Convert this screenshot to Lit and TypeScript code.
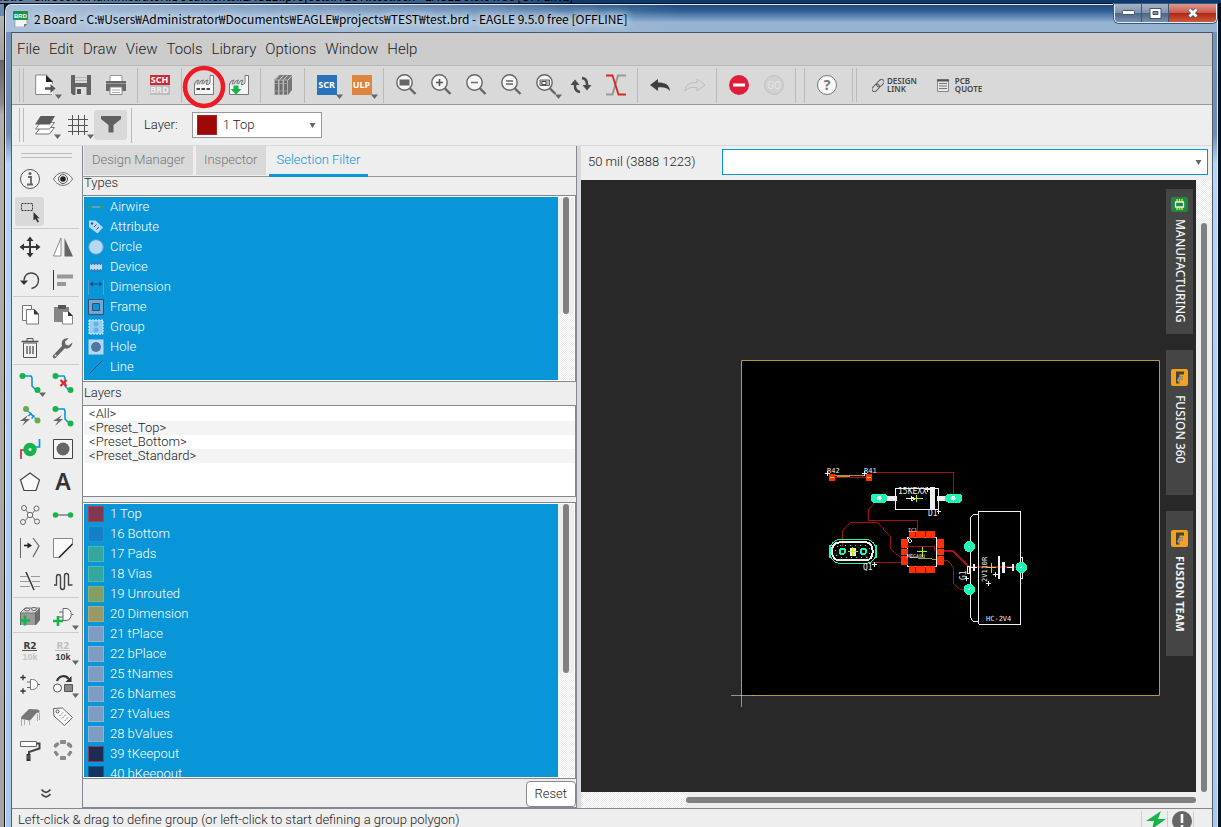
import { LitElement, html, svg, css, nothing } from "lit";
import { customElement, property, state } from "lit/decorators.js";
import { classMap } from "lit/directives/class-map.js";
import { styleMap } from "lit/directives/style-map.js";

const G = "#666";
const GREEN = "#17b34b";
const BLUE = "#0996d9";

const lens = (inner: unknown) => svg`
  <circle cx="10.5" cy="9.5" r="7.7" fill="#f6f6f6" stroke="${G}" stroke-width="1.4"/>
  <path d="M16 15.5l5.5 5.5" stroke="${G}" stroke-width="2.4"/>${inner}`;

const plus = (x: number, y: number, s = 4.5, c = GREEN, w = 2.6) =>
  svg`<path d="M${x - s} ${y}h${s * 2}M${x} ${y - s}v${s * 2}" stroke="${c}" stroke-width="${w}"/>`;

const factoryShape = svg`<path d="M2.500 21.500V12.500l2.500-1 2 .5 2.500-1 2 .5 2.500-1 3 .5.500-8.500h3.500l.5 19z" fill="#f6f6f6"/><path d="M2.500 21.500V10.500M2.500 21.500h19M21.500 21.500v-19M18 2.500h3.500M18 2.500v7.500q-1.500 2-4 1.500" stroke="#777"/><path d="M2.500 11q1-4 4.500-4-1.500 1.500-1.500 4.500M7 11q1-4 4.500-4-1.500 1.500-1.500 4.500M11.500 11q1-4 4.500-4-1.500 1.500-1.500 4.500" stroke="#777"/>`;

const ICONS: Record<string, unknown> = {
  newdoc: svg`<path d="M2 2h10.500l6 6.500v13.500h-16.500z" fill="#fff"/><path d="M18.500 11V8.500L12.500 2H1.700v19.500H18" fill="none" stroke="#888" stroke-width="1"/><path d="M12 2v7h7z" fill="#222"/><path d="M11 15.500h7" stroke="#555" stroke-width="2.600"/><path d="M16.500 11l5 4.500-5 4.500z" fill="#555"/>`,
  save: svg`<path d="M2 2h20v20H4l-2-2z" fill="#636363"/><path d="M6 2h12v8H6z" fill="#d9d9d9"/><path d="M6 4.500h12M6 7.500h12" stroke="#b5b5b5"/><path d="M6.500 14h11v8h-11z" fill="#ddd"/><path d="M8 16h4v5H8z" fill="#555"/>`,
  print: svg`<path d="M6 2.500h12v6H6z" fill="#fff" stroke="#999"/><path d="M2 8h20v10H2z" fill="#666"/><path d="M2 10.500h20" stroke="#999"/><path d="M6 14h12v7.500H6z" fill="#fff" stroke="#888"/><path d="M8 17h8M8 19.500h8" stroke="#aaa"/>`,
  factory: svg`${factoryShape}<path d="M4.500 16h3.500M9.500 16h3.500M14.500 16h3.500" stroke="#444" stroke-width="2"/>`,
  factoryDown: svg`${factoryShape}<path d="M6.500 12.500h5v3.500h3l-5.500 5.500L3.500 16h3z" fill="${GREEN}"/>`,
  books: svg`<path d="M3 7l5-5h13v15l-4 5H3z" fill="#777"/><path d="M3.500 7h4v15h-4zM8 7h4v15H8zM12.500 7h4v15h-4z" fill="#6d6d6d" stroke="#d0d0d0" stroke-width=".7"/><path d="M4 6.500l4-4M8.500 6.500l4-4M12.500 6.500l4-4M17 7l4-4.500" stroke="#ddd" stroke-width=".9"/><path d="M4 10.500h13M4 18h13" stroke="#aaa" stroke-width=".8"/>`,
  zoomFit: lens(svg`<path d="M5.500 6.500h10v6h-10z" fill="#666"/>`),
  zoomIn: lens(svg`<path d="M7 9.500h7M10.500 6v7" stroke="#555" stroke-width="1.600"/>`),
  zoomOut: lens(svg`<path d="M7 9.500h7" stroke="#777" stroke-width="1.600"/>`),
  zoomEq: lens(svg`<path d="M7 8h7M7 11h7" stroke="#666" stroke-width="1.500"/>`),
  zoomSel: lens(svg`<path d="M6 7h9.500v5.500H6z" fill="#bbb" stroke="#666"/><path d="M8 8.500h4v3H8z" fill="#fff" stroke="#444"/>`),
  refresh: svg`<g fill="none" stroke="#4a4a4a" stroke-width="2.600"><path d="M6 11v2c0 3 2 5.500 5 6"/><path d="M18 13v-2c0-3-2-5.500-5-6"/></g><path d="M1.500 12L6 6.500l4.500 5.500zM13.500 12h9L18 17.500z" fill="#4a4a4a"/>`,
  ripup: svg`<path d="M2 21.500h6.500L14 2.500h8" fill="none" stroke="#999" stroke-width="2"/><path d="M2 2.500h6.500l6 19h7.500" fill="none" stroke="#d8261c" stroke-width="1.800"/>`,
  undo: svg`<path d="M2 12l8-6v3.500c7 0 11.500 2 12 8.500-3-3.500-7-4-12-3.500V18z" fill="#3e3e3e"/>`,
  redo: svg`<path d="M22 12l-8-6v3.500c-7 0-11.500 2-12 8.500 3-3.500 7-4 12-3.500V18z" fill="none" stroke="#bbb"/>`,
  stop: svg`<circle cx="12" cy="12" r="10" fill="#dd1f3c"/><path d="M6 12h12" stroke="#fff" stroke-width="3"/>`,
  go: svg`<circle cx="12" cy="12" r="9.500" fill="#d0d0d0" stroke="#c2c2c2"/><text x="12" y="16" text-anchor="middle" font-size="10" font-family="Roboto, sans-serif" fill="#e6e6e6">GO</text>`,
  help: svg`<circle cx="12" cy="12" r="9.500" fill="#f8f8f8" stroke="#777"/><text x="12" y="17" text-anchor="middle" font-size="14" font-weight="700" font-family="Noto Sans, sans-serif" fill="#777">?</text>`,
  layers: svg`<path d="M2.500 21l5-6.500h14l-5 6.500z" fill="#fff" stroke="#777"/><path d="M2.500 16l5-6.500h14l-5 6.500z" fill="#fff" stroke="#777"/><path d="M2 11.500L7.500 3H22l-5 8.500z" fill="#5c5c5c"/>`,
  grid: svg`<path d="M2 6.500h20M2 12.500h20M2 18.500h20M6.500 2v20M12.500 2v20M18.500 2v20" stroke="#555"/>`,
  funnel: svg`<path d="M2 3h20v3l-7.500 6v7.500h-5V12L2 6z" fill="#606060"/>`,
  info: svg`<circle cx="12" cy="12" r="9.500" fill="#f3f3f3" stroke="#555"/><path d="M10 10h3v7M9 17.500h6" fill="none" stroke="#666" stroke-width="1.800"/><circle cx="12" cy="6.500" r="1.600" fill="#666"/>`,
  eye: svg`<path d="M2.500 12c5-8.500 14-8.500 19 0-5 8.500-14 8.500-19 0z" fill="#f4f4f4" stroke="#666"/><circle cx="12" cy="12" r="4.500" fill="none" stroke="#555"/><circle cx="12" cy="12" r="2.800" fill="#222"/>`,
  select: svg`<path d="M3.500 3.500h11v7h-11z" fill="none" stroke="#333" stroke-dasharray="2 1"/><path d="M15.500 12v8.500l2-1.500 2 3.500 1.500-.8-2-3.500h2.500z" fill="#333"/>`,
  move: svg`<path d="M4 12h16M12 4v16" stroke="#3b3b3b" stroke-width="2"/><path d="M12 1.500l3.500 4.500h-7zM12 22.500l3.500-4.500h-7zM1.500 12L6 8.500v7zM22.500 12L18 8.500v7z" fill="#333"/>`,
  mirror: svg`<path d="M10 3v18H2.500z" fill="#fff" stroke="#888"/><path d="M13.500 3v18.500H22z" fill="#666"/>`,
  rotate: svg`<path d="M6 12.500C6 2 20.500 3 20.500 12c0 5-3 7.500-7 8.500" fill="none" stroke="#444" stroke-width="1.400"/><path d="M2 12.500h8L6 17z" fill="#333"/>`,
  align: svg`<path d="M2.500 2v20" stroke="#333" stroke-width="1"/><path d="M6 6.500h16v4H6z" fill="#999"/><path d="M6 14h9v4H6z" fill="#999"/>`,
  copy: svg`<path d="M4.500 2.500h9v15h-9z" fill="#fff" stroke="#777"/><path d="M8.500 6.500h8l4 4.500v10h-12z" fill="#fff" stroke="#777"/><path d="M16 6v5.500h5z" fill="#333"/>`,
  paste: svg`<path d="M3 4h15v15H3z" fill="#858585"/><path d="M7 2h8v4H7z" fill="#555"/><path d="M11.500 8.500h6l4 4.500v8h-10z" fill="#fff" stroke="#888"/><path d="M17 8v5h5z" fill="#333"/>`,
  trash: svg`<path d="M5.500 7h13v14.500h-13z" fill="#f2f2f2" stroke="#555"/><path d="M3.500 5.500h17" stroke="#555" stroke-width="1.600"/><path d="M9 5V2.500h6V5" fill="none" stroke="#555"/><path d="M9 10v8M12 10v8M15 10v8" stroke="#666" stroke-width="1.500"/>`,
  wrench: svg`<path d="M3.500 20.500l9-9.500" stroke="#666" stroke-width="3.600" stroke-linecap="round"/><path d="M17.500 2.500c-6-1-8 4-6 9 4 2.500 9 1 10-5l-4 3-3-1-.5-3z" fill="#666"/><circle cx="4.500" cy="19.500" r="1" fill="#ddd"/>`,
  route: svg`<path d="M4 5h9l1 2v8l5 5" fill="none" stroke="${BLUE}" stroke-width="1.600"/><circle cx="4.500" cy="5" r="3" fill="${GREEN}"/><circle cx="19.500" cy="19" r="3" fill="${GREEN}"/>`,
  ripup2: svg`<path d="M4 5h9l1 2v8l5 5" fill="none" stroke="${BLUE}" stroke-width="1.600"/><circle cx="4.500" cy="5" r="3" fill="${GREEN}"/><circle cx="19.500" cy="19" r="3" fill="${GREEN}"/><path d="M9.500 9l6 6M15.500 9l-6 6" stroke="#e22" stroke-width="2.200"/>`,
  autoroute: svg`<path d="M8 5l11 11" stroke="${BLUE}" stroke-width="1.200" stroke-dasharray="4 2"/><path d="M10.500 12l3-3M13.500 14.500l3-3M11 8l5 5" stroke="${BLUE}" stroke-width="1.600"/><circle cx="8" cy="5" r="3" fill="#6fa84a"/><circle cx="19.500" cy="16.500" r="3" fill="#6fa84a"/><path d="M10 11l-8 6h5l-3 5 8-7H7.500z" fill="#666"/>`,
  quickroute: svg`<path d="M4 5h9l1 2v8l5 5" fill="none" stroke="${BLUE}" stroke-width="1.600"/><circle cx="4.500" cy="5" r="3" fill="${GREEN}"/><circle cx="19.500" cy="19.500" r="3" fill="${GREEN}"/><path d="M11 11l-9 6h5l-3 5 8-7H8z" fill="#666"/>`,
  via: svg`<path d="M3 22v-9h5" fill="none" stroke="#c03040" stroke-width="1.700"/><path d="M21.500 2v8H16" fill="none" stroke="${BLUE}" stroke-width="1.700"/><circle cx="12" cy="12.500" r="6.700" fill="${GREEN}"/><circle cx="12" cy="12.500" r="1.500" fill="#fff"/>`,
  hole: svg`<path d="M2.500 2.500h19v19h-19z" fill="#f6f6f6" stroke="#444"/><circle cx="12" cy="12" r="6.500" fill="#666"/>`,
  polygon: svg`<path d="M12 3l9.500 7-3.500 10.500H6L2.500 10z" fill="#fafafa" stroke="#444" stroke-width="1.200"/>`,
  text: svg`<text x="12" y="20" text-anchor="middle" font-size="23" font-weight="600" font-family="Noto Sans, sans-serif" fill="#333">A</text>`,
  ratsnest: svg`<path d="M7 6l4 5M18 6l-4 5M6 19l5-6M18 18l-4-5" stroke="#666"/><g fill="#f4f4f4" stroke="#666"><circle cx="6" cy="5" r="2.500"/><circle cx="18.500" cy="5.500" r="2.500"/><circle cx="12" cy="12" r="2.700"/><circle cx="5" cy="19" r="2.500"/><circle cx="19" cy="18.500" r="2.500"/></g>`,
  airwire: svg`<path d="M5 12h14" stroke="#888" stroke-width="1.600"/><circle cx="4.500" cy="12" r="2.800" fill="${GREEN}"/><circle cx="19.500" cy="12" r="2.800" fill="${GREEN}"/>`,
  split: svg`<path d="M2.500 2v20" stroke="#666"/><path d="M6 9.500h5" stroke="#222" stroke-width="1.600"/><path d="M9.500 6.500l4.500 3-4.500 3z" fill="#222"/><path d="M15 2l6 8-6 11" fill="none" stroke="#666" stroke-width="1.200"/>`,
  miter: svg`<path d="M2.500 2.500h19V8L8 21.500H2.500z" fill="#fafafa"/><path d="M8 21.500H2.500v-19h19V8" stroke="#888"/><path d="M8 21.500L21.500 8" stroke="#222" stroke-width="1.600"/>`,
  cut: svg`<path d="M2 7.500h7M2 12.500h9M2 17.500h10M13 7.500h9M14 12.500h8M16 17.500h6" stroke="#999"/><path d="M8 3l8 18" stroke="#333" stroke-width="1.500"/>`,
  meander: svg`<path d="M3 16h2.500V8q0-2.500 2-2.500t2 2.500v10q0 2.500 2 2.500t2-2.500V7q0-2.500 2-2.500t2 2.500v9h4" fill="none" stroke="#444" stroke-width="1.400"/>`,
  lego: svg`<path d="M2 9l5-5h15v12l-5 5H2z" fill="#999"/><path d="M2 9l5-5h15l-5 5z" fill="#d4d4d4" stroke="#666" stroke-width=".8"/><path d="M2.500 9v12M17 9h.5V21" stroke="#666"/><path d="M18 9l4-4.500V16l-4 5z" fill="#6d6d6d"/><ellipse cx="9" cy="5.500" rx="2.500" ry="1.500" fill="#eee" stroke="#666"/><ellipse cx="16" cy="5" rx="2.500" ry="1.500" fill="#eee" stroke="#666"/>${plus(7, 16.500, 5)}`,
  gatePlus: svg`<path d="M12 4.500h3c7 0 7 12 0 12h-3z" fill="#fff" stroke="#666"/><path d="M8 8h4M8 13h4M20.500 10.500h2" stroke="#666"/>${plus(7, 17, 5)}`,
  r2: svg`<text x="12" y="9.500" text-anchor="middle" font-size="9" font-weight="700" font-family="DejaVu Sans, sans-serif" fill="#3b3b3b">R2</text><path d="M4 11.500h15" stroke="#555"/><text x="12" y="21" text-anchor="middle" font-size="9" font-weight="700" font-family="Liberation Sans, sans-serif" fill="#c4c4c4">10k</text>`,
  r10: svg`<text x="12" y="9.500" text-anchor="middle" font-size="9" font-weight="700" font-family="DejaVu Sans, sans-serif" fill="#c0c0c0">R2</text><path d="M4 11.500h15" stroke="#bbb"/><text x="12" y="21" text-anchor="middle" font-size="9" font-weight="700" font-family="Liberation Sans, sans-serif" fill="#3b3b3b">10k</text>`,
  gateSwap: svg`<path d="M12.500 7.500h2c7 0 7 10 0 10h-2z" fill="#fff" stroke="#777"/><path d="M9 10h3.500M9 15.500h3.500M19.500 12.500h2.500" stroke="#666"/>${plus(5, 5.500, 2.700, "#333", 1.300)}${plus(5, 19, 2.700, "#333", 1.300)}`,
  replace: svg`<path d="M6 9c2-6 9-6 11.500-2" fill="none" stroke="#333" stroke-width="2.200"/><path d="M20.500 4v6h-6z" fill="#333"/><circle cx="6.500" cy="16" r="4" fill="#fff" stroke="#555"/><path d="M13.500 12.500h8v7h-8z" fill="#888" stroke="#555"/>`,
  smash: svg`<path d="M3 14q0-3 2-4l6-6 9 .5q2 .5 1.500 3l-3 .5-6 7q-1 1.500-3 0z" fill="#777"/><path d="M3.500 14v7M6.500 15v5M11.500 15v5M19.500 9v7M21.500 8v7" stroke="#aaa"/>`,
  tag: svg`<path d="M2.500 3.500l9-.5 10 9.500-8 8L3 11z" fill="#fafafa" stroke="#666"/><circle cx="6.500" cy="6.500" r="1.500" fill="none" stroke="#555"/><path d="M8.500 11l4-4M11 13.500l4-4M13.500 16l4-4" stroke="#777" stroke-dasharray="2 1"/>`,
  roller: svg`<path d="M2.500 3.500h16v5h-16z" fill="#fff" stroke="#666"/><path d="M18.500 5.500h3v5L11 14v2" fill="none" stroke="#444" stroke-width="2"/><path d="M8.500 16h4v7h-4z" fill="#333"/><path d="M8.500 18h4M8.500 20h4" stroke="#999" stroke-width=".6"/>`,
  ring: svg`<g fill="#8a8a8a" stroke="#666" stroke-width=".6"><path d="M9.500 2.500h5v3h-5zM9.500 18.500h5v3h-5z"/><path d="M4 6l3-1.500 1 2-3 3-2-1zM17 4.500L20 6l1 3-2 .5-3-2.500zM3 14l2-1 2.500 3.500-2 1.500zM21 14l-2-1-2.500 3.500 2 1.500z"/></g>`,
  chevrons: svg`<path d="M7.500 7.500c1.500 2 3 2.500 4.500 3 1.500-.5 3-1 4.500-3M7.500 12c1.500 2 3 2.500 4.500 3 1.500-.5 3-1 4.500-3" fill="none" stroke="#444" stroke-width="1.500"/>`,
  link: svg`<g fill="none" stroke="#666" stroke-width="1.100" transform="rotate(-45 6 6.500)"><rect x="-1.500" y="4" width="8.500" height="5" rx="2.500"/><rect x="5" y="4" width="8.500" height="5" rx="2.500"/></g>`,
  quote: svg`<path d="M.5.500h11v12H.5z" fill="#e6e6e6" stroke="#888"/><path d="M0 1.500h12" stroke="#555" stroke-width="2"/><path d="M2 4.500h8M2 7h8M2 9.500h8" stroke="#777"/>`,
};

const L = "#b5d8f6";
const N = "#2c5a8a";
const TYPES: [string, unknown][] = [
  ["Airwire", svg`<path d="M2 8h12" stroke="#7d9fc2" stroke-width="1.500"/><circle cx="2" cy="8" r="2" fill="#1fa372"/><circle cx="14" cy="8" r="2" fill="#1fa372"/>`],
  ["Attribute", svg`<path d="M1 1.500h6.500l7.500 7-5.500 6L1 8z" fill="${L}"/><circle cx="4" cy="4.500" r="1.200" fill="${N}"/><path d="M6 8l2.500-2.500M8.500 10.500L11 8" stroke="${N}"/>`],
  ["Circle", svg`<circle cx="8" cy="8" r="7.300" fill="${L}" stroke="#5d9fd4"/>`],
  ["Device", svg`<path d="M2 5h12v6H2z" fill="${L}"/><path d="M3.500 3v3M6.500 3v3M9.500 3v3M12.500 3v3M3.500 10v3M6.500 10v3M9.500 10v3M12.500 10v3" stroke="#4c6f9c" stroke-width="1.500"/>`],
  ["Dimension", svg`<path d="M.5 1v15M15.500 1v15" stroke="#5a9bd0"/><path d="M3 5h10" stroke="#1f4f80"/><path d="M1.500 5L5 2.500v5zM14.500 5L11 2.500v5z" fill="#1f4f80"/>`],
  ["Frame", svg`<path d="M.5.500h15v15H.5z" fill="#7ba3cc" stroke="#31507a"/><path d="M4.500 4.500h7v7h-7z" fill="${BLUE}" stroke="#31507a"/>`],
  ["Group", svg`<path d="M1 1h14v14H1z" fill="#9bcdf2" stroke="#e2f1fc" stroke-dasharray="2 1"/><circle cx="8" cy="5" r="2.500" fill="#5fb4ea"/><circle cx="8" cy="11" r="2.500" fill="#5fb4ea"/>`],
  ["Hole", svg`<path d="M.5.500h15v15H.5z" fill="${L}"/><circle cx="8" cy="8" r="5" fill="#52779f"/>`],
  ["Line", svg`<path d="M1.500 14.500l13-13" stroke="#1f4f80"/>`],
];

const LAYERS: [string, string, string][] = [
  ["1 Top", "#7f3850", "#a8405a"], ["16 Bottom", "#1480c8", "#2a8fd4"], ["17 Pads", "#33a79d", "#4dbbb0"],
  ["18 Vias", "#33a79d", "#4dbbb0"], ["19 Unrouted", "#82a066", "#8fb070"], ["20 Dimension", "#969b68", "#b0a970"],
  ["21 tPlace", "#7f9dc0", "#95b2d2"], ["22 bPlace", "#7f9dc0", "#95b2d2"], ["25 tNames", "#7f9dc0", "#95b2d2"],
  ["26 bNames", "#7f9dc0", "#95b2d2"], ["27 tValues", "#7f9dc0", "#95b2d2"], ["28 bValues", "#7f9dc0", "#95b2d2"],
  ["39 tKeepout", "#1c2c52", "#8a3a5c"], ["40 bKeepout", "#143560", "#1a5a9a"],
];

const icon = (name: string) => html`<svg width="24" height="24" viewBox="0 0 24 24" fill="none" aria-hidden="true">${ICONS[name]}</svg>`;

@customElement("tool-button")
class ToolButton extends LitElement {
  @property() name = "";
  @property() label = "";
  @property({ type: Boolean }) menu = false;
  @property({ type: Boolean }) pressed = false;
  static styles = css`
    :host { display: block; position: relative; }
    button { display: grid; place-items: center; width: 100%; height: 100%; padding: 0; border: 0; background: none; position: relative; }
    .pressed { background: #d9d9d9; border-radius: 3px; }
    .arrow { position: absolute; left: calc(50% + 9px); top: calc(50% + 9px); }
    .tile { display: grid; place-items: center; width: 20px; height: 20px; color: #fff; font: 700 9px/10px "Noto Sans", sans-serif; }
    .scr { background: #2b72bd; }
    .ulp { background: #df8440; }
    .pair { grid-template-rows: 10px 10px; }
    .pair span { width: 20px; text-align: center; }
    .sch { background: #cf2a30; }
    .brd { background: #bdbdbd; color: #eee; }
  `;
  render() {
    const face =
      this.name === "scr" ? html`<span class="tile scr">SCR</span>`
      : this.name === "ulp" ? html`<span class="tile ulp">ULP</span>`
      : this.name === "schbrd" ? html`<span class="tile pair"><span class="sch">SCH</span><span class="brd">BRD</span></span>`
      : icon(this.name);
    return html`<button type="button" class=${classMap({ pressed: this.pressed })} aria-label=${this.label || this.name}>
      ${face}
      ${this.menu ? html`<svg class="arrow" width="7" height="5" viewBox="0 0 7 5"><path d="M0 .5h7L3.500 5z" fill="#666"/></svg>` : nothing}
    </button>`;
  }
}

@customElement("pcb-board")
class PcbBoard extends LitElement {
  static styles = css`
    :host { display: block; overflow: hidden; }
    svg { display: block; width: 100%; height: 100%; }
    text { font-family: "DejaVu Sans Mono", monospace; fill: #ececec; }
  `;
  render() {
    const pads = [[297, 243], [319, 243], [348, 243], [297, 348], [319, 348], [348, 348]];
    const sides = [[273, 267], [273, 297], [273, 318], [381, 267], [381, 297], [381, 318]];
    return html`<svg viewBox="581 180 615 612" preserveAspectRatio="xMaxYMid meet" role="img" aria-label="Board layout">
      <path d="M741.500 360.500h418v335h-418z" fill="#000" stroke="#b99a35"/>
      <path d="M731.500 695.500h21M741.500 685.500v21" stroke="#282828"/>
      <path d="M731.500 695.500h21M741.500 685.500v21" stroke="#fff" stroke-dasharray="1 1"/>
      <g transform="translate(810 450) scale(.33333)" fill="none" stroke-width="3" shape-rendering="crispEdges">
        <g stroke="#a31015">
          <path d="M180 67.500h250.500v70M66 82.500h110M195 157l-19.500 22v32.500h147v32M97.500 292v-51l25-24.500h78l40 41v38l34 30M275 337.500h-94.500l-15-25M292 289.500h82v14"/>
          <path d="M402 303h28l48 48h154" stroke-width="7"/>
          <path d="M402 331h10l18 20v48l19 19h20"/>
        </g>
        <path d="M76 76.500h90M80 79.500h40M300 322l50 4 30 2" stroke="#a39a30"/>
        <g stroke="#eee">
          <path d="M256 115h129v64H256zM506 184h126v339H506zM506 193h-16l-9 9v300l9 12h16M632 322h6v63h-6M292 262h88v87h-88z"/>
          <path d="M360 112h15v66h-15zM232 139h28v13h-28zM382 139h24v13h-24z" fill="#eee" stroke="none"/>
          <path d="M288 146h50M319 136v20M304 140l12 6-12 6zM46 70h14M53 64v14M157 70h14M164 64v14M352 112v14M345 119h14M387 177v14M380 184h14M193 336v14M186 343h14M297 266l9 6-6 6-6-6zM471 379v14M464 386h14M557 366v14M550 373h14M535 394v14M528 401h14"/>
          <path d="M472 350v20h8v-20zM480 352h20M491 342v20M567 320v65M590 352h20M608 343v19"/>
          <path d="M564 318h6v68h-6zM575 335h10v34h-10zM606 342h6v20h-6zM488 342h6v20h-6zM120 293h7v25h-7zM130 293h7v25h-7z" fill="#eee" stroke="none"/>
          <path d="M90 277h78q20 2 20 27t-20 27H90q-24 0-24-27t24-27z" stroke-width="6"/>
        </g>
        <g stroke="#20f5b8">
          <path d="M88 268h82q28 4 28 36t-28 36H88q-28-4-28-36t28-36z"/>
          <path d="M90 288h78q10 0 12 16-2 16-12 18H90q-12-2-14-18 2-16 14-16z" stroke-dasharray="3 12"/>
          <circle cx="97" cy="304" r="8" stroke-width="6"/><circle cx="160" cy="304" r="8" stroke-width="6"/>
          <path d="M60 285v38M198 285v38" stroke-width="6"/>
        </g>
        <g fill="#20f5b8">
          <rect x="183" y="132" width="48" height="26" rx="10"/><rect x="406" y="132" width="50" height="26" rx="10"/>
          <circle cx="478" cy="290" r="17"/><circle cx="478" cy="418" r="17"/><circle cx="634" cy="352" r="17"/>
        </g>
        <g fill="#e8f4e8"><circle cx="208" cy="145" r="7"/><circle cx="430" cy="145" r="7"/><circle cx="478" cy="290" r="3"/><circle cx="478" cy="418" r="3"/><circle cx="634" cy="352" r="3"/></g>
        <g fill="#ff2f08">
          ${pads.map(([x, y]) => svg`<rect x=${x} y=${y} width=${x === 297 ? 18 : 27} height="21"/>`)}
          ${sides.map(([x, y]) => svg`<rect x=${x} y=${y} width="21" height=${y === 297 ? 18 : 27}/>`)}
          <rect x="57" y="72" width="18" height="21"/><rect x="168" y="72" width="18" height="21"/>
        </g>
        <path d="M60 82h12M170 82h12M310 146h22M319 136v20M322 305h30M337 290v30M530 352h28M544 338v30M115 304h30M128 290v28" stroke="#b4f000"/>
      </g>
      <g font-size="7">
        <text x="827" y="473">R42</text><text x="864" y="473">R41</text>
        <text x="898" y="494" font-size="8">15KEXX</text><text x="928" y="516" font-size="8">D1</text>
        <text x="863" y="570" font-size="8">Q1</text><text x="908" y="532" font-size="5">IC1</text>
        <text x="907" y="558" font-size="5">MEGA8U</text><text x="986" y="621">HC-2V4</text>
        <text transform="translate(966 580) rotate(-90)" font-size="8">G1</text>
        <text transform="translate(987 582) rotate(-90)" font-size="7">2V110R</text>
      </g>
    </svg>`;
  }
}

@customElement("app-root")
class AppRoot extends LitElement {
  @state() private layer = "1 Top";

  static styles = css`
    :host { display: block; height: 100vh; overflow: hidden; font: 300 13px/14px Roboto, "Noto Sans CJK KR", sans-serif; color: #222; }
    * { box-sizing: border-box; }
    button, input, select { font: inherit; color: inherit; margin: 0; }
    ul { list-style: none; margin: 0; padding: 0; }
    .desktop { display: grid; grid-template: 4px minmax(0, 1fr) / 4px minmax(0, 1fr) 3px; height: 100%; background: #05111f; }
    .behind { grid-column: 1 / -1; display: flex; align-items: flex-end; overflow: hidden; background: #0d3a6e; border-bottom: 1px solid #04101f; }
    .behind span { margin-left: -45px; font: 400 12px/15px "Noto Sans CJK KR", sans-serif; white-space: nowrap; color: #000; background: linear-gradient(90deg, #6d86a0, #2f5a88 90%, #0d3a6e); padding-right: 8px; }
    .behind-left { background: linear-gradient(#6b8bb0 0, #6b8bb0 12px, #b4b4b4 12px, #a2a2a2 56px, #666 56px, #8c8c8c 100px, #b0b0b0 110px, #a4a4a4 100%); }
    .frame { display: flex; flex-direction: column; min-width: 0; min-height: 0; padding: 0 6px 0 7px; border-left: 1px solid #111; border-radius: 7px 7px 0 0; background: linear-gradient(#7995b8 0, #6f8cae 130px, #b9d5f5 160px, #a9c8ea 100%); box-shadow: inset 1px 1px 0 #dfe9f5, inset -1px 0 0 #dfe9f5; }
    .title { position: relative; flex: none; display: flex; align-items: center; gap: 6px; height: 27px; margin: 1px -5px 0 -6px; padding-left: 7px; border-radius: 6px 6px 0 0; background: linear-gradient(90deg, #a9c0da, #a9c0da80 40%, #a9c0da00 56%), linear-gradient(#1d4a80, #2c5b90 20%, #6f95bf 50%, #97b3d2 65%, #97b3d2); }
    .title h1 { margin: 0; font: 400 12px/18px "Noto Sans CJK KR", sans-serif; color: #000; white-space: nowrap; text-shadow: 0 0 6px #d4e1ef, 0 0 8px #d4e1ef, 0 0 10px #c8d8ea, 0 0 12px #c8d8ea; }
    .winbtns { position: absolute; right: 0; top: -1px; display: flex; border: 1px solid #e4edf7; border-top: 0; border-radius: 0 0 5px 5px; overflow: hidden; box-shadow: 0 0 0 1px #3b5878; }
    .winbtns button { display: grid; place-items: center; width: 27px; height: 18px; padding: 0; border: 0; border-right: 1px solid #41566f; background: linear-gradient(#a5b3c6, #8194ad 48%, #4e6583 50%, #7690b0); }
    .winbtns .close { width: 47px; border-right: 0; background: linear-gradient(#dd9a8f, #cb5b4a 48%, #ab2513 50%, #cf5a3a); }
    .client { flex: 1; min-height: 0; display: flex; flex-direction: column; background: #eee; border-top: 1px solid #46566a; box-shadow: 0 0 0 1px #4a6079; }
    .menu { flex: none; display: flex; gap: 9px; height: 33px; align-items: center; padding: 0 5px; background: #ccc; border-bottom: 1px solid #b8b8b8; }
    .menu button { padding: 0; border: 0; background: none; font-size: 15px; line-height: 20px; }
    .bar { flex: none; display: flex; align-items: center; height: 39px; padding-left: 7px; background: #d9d9d9; border-bottom: 1px solid #999; }
    .bar tool-button { width: 35px; height: 36px; }
    .grip { width: 5px; height: 34px; border: solid #bbb; border-width: 0 1px; margin-right: 4px; }
    .sep { width: 1px; height: 35px; margin: 0 4px; background: #b9b9b9; }
    .mid { margin: 0 15px 0 8px; }
    .word { display: flex; align-items: center; gap: 3px; padding: 0; margin-right: 20px; border: 0; background: none; text-align: left; font: 600 8px/8px "Noto Sans", sans-serif; color: #444; }
    .wide { gap: 6px; }
    .bar2 { height: 41px; background: #eee; border-color: #d9d9d9; }
    .bar2 tool-button { width: 33px; height: 30px; }
    .layer-label { margin: 0 14px 0 8px; }
    .combo { display: flex; align-items: center; position: relative; width: 130px; height: 26px; padding-left: 4px; border: 1px solid #999; background: #fff; }
    .combo i { width: 20px; height: 20px; border: 1px solid #b02020; background: #9d0909; }
    .combo select { flex: 1; height: 24px; padding: 0 16px 0 6px; border: 0; background: none; appearance: none; outline: 0; }
    .down { position: absolute; right: 5px; top: 10px; pointer-events: none; }
    .marker { position: relative; }
    .marker svg.ring { position: absolute; left: -5px; top: -5px; pointer-events: none; z-index: 2; }
    .main { flex: 1; min-height: 0; display: grid; grid-template-columns: 70px minmax(0, 495fr) 4px minmax(0, 631fr); }
    .palette { display: flex; flex-direction: column; padding: 7px 3px 0 1px; overflow: hidden; }
    .palette .hgrip { flex: none; height: 5px; margin: 0 7px 4px 8px; border: solid #bfbfbf; border-width: 1px 0; }
    .group { flex: none; display: grid; grid-template-columns: 33px 33px; grid-auto-rows: 33px; border-bottom: 1px solid #ccc; margin-bottom: 1px; }
    .group:last-of-type { border: 0; }
    .group tool-button { margin: 2px; }
    .palette .more { height: 24px; margin-top: 15px; }
    .dock { display: flex; flex-direction: column; min-width: 0; min-height: 0; border: solid #828790; border-width: 0 1px 1px 1px; }
    .tabs { flex: none; display: flex; gap: 3px; height: 31px; padding-left: 2px; border-bottom: 1px solid #999; margin-left: -1px; }
    .tabs button { height: 29px; padding: 0 8px 2px; border: 0; background: #d9d9d9; color: #777; }
    .tabs .active { height: 31px; padding-bottom: 1px; background: none; color: #0996d9; border-bottom: 3px solid #0996d9; }
    h2 { flex: none; margin: 0; padding: 0 0 6px 1px; font: inherit; line-height: 12px; height: 18px; }
    .h2b { height: 23px; line-height: 22px; padding: 0 0 0 1px; }
    .list { display: flex; border: 1px solid #828790; border-width: 1px 1px 1px 0; padding: 1px; background: #fff; overflow: hidden; }
    .types { flex: none; height: 187px; }
    .layers { flex: 1; min-height: 0; margin-top: 5px; }
    .list ul { flex: 1; min-width: 0; overflow: hidden; background: #0996d9; color: #fff; }
    .list li { display: flex; align-items: center; gap: 6px; height: 20px; padding-left: 4px; }
    .list li span { line-height: 16px; }
    .list i { width: 16px; height: 16px; border: 1px solid; }
    .presets { flex: none; height: 92px; padding: 1px 0 0 1px; border: 1px solid #828790; border-left: 0; background: #fff; }
    .presets li { height: 14px; padding-left: 5px; white-space: nowrap; }
    .presets li:nth-child(even) { background: #f4f4f4; }
    .track { flex: none; width: 16px; background: repeating-conic-gradient(#eaeaea 0 25%, #fff 0 50%) 0 0 / 2px 2px; }
    .thumb { display: flex; justify-content: center; background: #eee; }
    .thumb::before { content: ""; width: 6px; border-radius: 3px; background: #808080; }
    .foot { flex: none; display: flex; justify-content: flex-end; padding: 2px 0 0; }
    .foot button { height: 26px; padding: 0 8px; border: 1px solid #888; border-radius: 4px; background: #fff; }
    .split { background: #d9d9d9; }
    .work { display: grid; grid-template: 34px minmax(0, 1fr) 16px / minmax(0, 1fr) 16px; min-width: 0; }
    .command { grid-column: 1 / -1; display: grid; grid-template-columns: minmax(0, 134fr) minmax(0, 486fr); align-items: center; padding: 0 4px 2px 7px; white-space: nowrap; }
    .command .combo { width: auto; border-color: #0996d9; }
    .command input { flex: 1; min-width: 0; height: 22px; border: 0; outline: 0; }
    .canvas { position: relative; background: #282828; min-height: 0; }
    .canvas pcb-board { height: 100%; }
    .side { position: absolute; right: 3px; top: 9px; display: flex; flex-direction: column; gap: 16px; }
    .side button { display: flex; align-items: center; width: 27px; height: 145px; padding: 8px 0; border: 0; background: #454545; color: #f4f4f4; writing-mode: vertical-rl; gap: 7px; font: 500 12px/16px "Noto Sans", sans-serif; }
    .side .fusion { padding-top: 19px; gap: 9px; }
    .side .team { font-size: 11px; font-weight: 700; }
    .vthumb { height: 93%; margin-top: auto; }
    .vtrack { display: flex; flex-direction: column; }
    .htrack { display: flex; width: auto; }
    .hthumb { align-items: center; width: 83%; margin-left: auto; }
    .hthumb::before { width: 100%; height: 6px; }
    .vthumb, .fill1, .fill2 { width: 16px; }
    .fill1 { height: 117px; }
    .fill2 { height: 62%; }
    .status { flex: none; display: flex; align-items: flex-start; height: 19px; padding: 3px 18px 0 6px; border-top: 1px solid #828790; overflow: hidden; }
    .status p { flex: 1; margin: 1px 0 0; white-space: nowrap; }
    .status span { flex: none; width: 26px; height: 24px; margin-top: -1px; border-left: 1px solid #d0d0d0; padding: 0 2px 0 4px; }
    .status span:last-child { border-right: 1px solid #d0d0d0; width: 27px; }
  `;

  private sep = html`<div class="sep"></div>`;

  private tools(names: string[]) {
    return names.map((n) => {
      const [name, flag] = n.split(":");
      return html`<tool-button name=${name} ?menu=${flag === "m"}></tool-button>`;
    });
  }

  private fIcon() {
    return html`<svg width="17" height="17" viewBox="0 0 17 17" aria-hidden="true"><rect width="17" height="17" rx="2" fill="#f3a11f"/><path d="M5 2.500h8v3H8.500V7.500H12v3H8.500v4H5z" fill="#4a4238"/><path d="M8 7.500h4v3H8.500v4l-2.500-3z" fill="#a29a90"/></svg>`;
  }

  render() {
    const arrow = html`<svg class="down" width="7" height="5" viewBox="0 0 7 5"><path d="M.5 0h6L3.500 5z" fill="#666"/></svg>`;
    const groups = [
      ["info", "eye", "*select"], ["move", "mirror", "rotate", "align"], ["copy", "paste", "trash", "wrench"],
      ["route:m", "ripup2", "autoroute", "quickroute", "via", "hole", "polygon", "text", "ratsnest", "airwire", "split", "miter", "cut", "meander"],
      ["lego", "gatePlus:m"],
      ["r2", "r10:m", "gateSwap", "replace:m", "smash", "tag", "roller", "ring"],
    ];
    return html`<div class="desktop">
      <div class="behind" aria-hidden="true"><span>1 Schematic - C:₩Users₩Administrator₩Documents₩EAGLE₩projects₩TEST₩test.sch - EAGLE 9.5.0 free [OFFLINE]</span></div>
      <div class="behind-left"></div>
      <div class="frame">
        <header class="title">
          <svg width="15" height="16" viewBox="0 0 15 16" aria-hidden="true"><path d="M2 7h12v6l-3 3H2z" fill="#f4f4f4" stroke="#888" stroke-width=".6"/><path d="M11 16v-3h3z" fill="#777"/><rect width="15" height="9" rx="1" fill="#189247"/><text x="7.500" y="7" text-anchor="middle" font-size="6" font-weight="700" font-family="Liberation Sans, sans-serif" fill="#fff">BRD</text></svg>
          <h1>2 Board - C:₩Users₩Administrator₩Documents₩EAGLE₩projects₩TEST₩test.brd - EAGLE 9.5.0 free [OFFLINE]</h1>
          <div class="winbtns">
            <button aria-label="Minimize"><svg width="13" height="6" viewBox="0 0 13 6"><rect x=".5" y=".5" width="12" height="4" rx="1" fill="#fff" stroke="#4b5566"/></svg></button>
            <button aria-label="Maximize"><svg width="13" height="11" viewBox="0 0 13 11"><path d="M1 .5h11v10H1z" fill="#fff" stroke="#4b5566"/><path d="M4 3.500h5v3H4z" fill="#8090a8" stroke="#4b5566"/></svg></button>
            <button class="close" aria-label="Close"><svg width="12" height="10" viewBox="0 0 12 10"><path d="M2.500 1.500l7 7M9.500 1.500l-7 7" stroke="#4b5566" stroke-width="4.500"/><path d="M2.500 1.500l7 7M9.500 1.500l-7 7" stroke="#fff" stroke-width="2.800"/></svg></button>
          </div>
        </header>
        <div class="client">
          <nav class="menu">${["File", "Edit", "Draw", "View", "Tools", "Library", "Options", "Window", "Help"].map((m) => html`<button type="button">${m}</button>`)}</nav>
          <div class="bar">
            <div class="grip"></div>
            ${this.tools(["newdoc:m", "save", "print"])}${this.sep}
            ${this.tools(["schbrd"])}${this.sep}
            <div class="marker"><tool-button name="factory"></tool-button>
              <svg class="ring" width="46" height="48" viewBox="0 0 46 48" aria-hidden="true"><circle cx="23" cy="25" r="19" fill="none" stroke="#ed1c24" stroke-width="4.500"/></svg></div>
            ${this.tools(["factoryDown"])}${this.sep}
            ${this.tools(["books"])}${this.sep}
            ${this.tools(["scr:m", "ulp:m"])}${this.sep}
            ${this.tools(["zoomFit", "zoomIn", "zoomOut", "zoomEq", "zoomSel:m", "refresh", "ripup"])}${this.sep}
            ${this.tools(["undo", "redo"])}${this.sep}
            ${this.tools(["stop", "go"])}${this.sep}${this.sep}
            ${this.tools(["help"])}
            <div class="grip mid"></div>
            <button class="word" type="button"><svg width="12" height="13" viewBox="0 0 12 13">${ICONS.link}</svg><span>DESIGN<br>LINK</span></button>
            <button class="word wide" type="button"><svg width="12" height="13" viewBox="0 0 12 13">${ICONS.quote}</svg><span>PCB<br>QUOTE</span></button>
          </div>
          <div class="bar bar2">
            <div class="grip"></div>
            ${this.tools(["layers:m", "grid:m"])}<tool-button name="funnel" pressed></tool-button>${this.sep}
            <label class="layer-label" for="layer">Layer:</label>
            <div class="combo"><i></i>
              <select id="layer" .value=${this.layer} @change=${(e: Event) => (this.layer = (e.target as HTMLSelectElement).value)}>${LAYERS.map(([n]) => html`<option>${n}</option>`)}</select>${arrow}
            </div>
          </div>
          <div class="main">
            <aside class="palette">
              <div class="hgrip"></div>
              ${groups.map((g) => html`<div class="group">${g.map((n) => {
                const [name, flag] = n.replace("*", "").split(":");
                return html`<tool-button name=${name} ?menu=${flag === "m"} ?pressed=${n[0] === "*"}></tool-button>`;
              })}</div>`)}
              <tool-button class="more" name="chevrons" label="More tools"></tool-button>
            </aside>
            <section class="dock">
              <div class="tabs"><button type="button">Design Manager</button><button type="button">Inspector</button><button type="button" class="active">Selection Filter</button></div>
              <h2>Types</h2>
              <div class="list types">
                <ul>${TYPES.map(([n, i]) => html`<li><svg width="16" height="16" viewBox="0 0 16 16" fill="none">${i}</svg><span>${n}</span></li>`)}</ul>
                <div class="track"><div class="thumb fill1"></div></div>
              </div>
              <h2 class="h2b">Layers</h2>
              <ul class="presets">${["<All>", "<Preset_Top>", "<Preset_Bottom>", "<Preset_Standard>"].map((p) => html`<li>${p}</li>`)}</ul>
              <div class="list layers">
                <ul>${LAYERS.map(([n, c, b]) => html`<li><i style=${styleMap({ background: c, borderColor: b })}></i><span>${n}</span></li>`)}</ul>
                <div class="track"><div class="thumb fill2"></div></div>
              </div>
              <div class="foot"><button type="button">Reset</button></div>
            </section>
            <div class="split"></div>
            <section class="work">
              <div class="command"><label for="cmd">50 mil (3888 1223)</label><div class="combo"><input id="cmd" type="text">${arrow}</div></div>
              <div class="canvas">
                <pcb-board></pcb-board>
                <div class="side">
                  <button type="button"><svg width="17" height="15" viewBox="0 0 17 15" aria-hidden="true"><rect width="17" height="15" rx="2" fill="#1c8a45"/><path d="M6 2v11M8.500 2v11M11 2v11" stroke="#f0e020" stroke-width="1.400"/><path d="M4.500 5h8v5h-8z" fill="#1c8a45" stroke="#e6f5d8" stroke-width="1.300"/></svg>MANUFACTURING</button>
                  <button type="button" class="fusion">${this.fIcon()}FUSION 360</button>
                  <button type="button" class="fusion team">${this.fIcon()}FUSION TEAM</button>
                </div>
              </div>
              <div class="track vtrack"><div class="thumb vthumb"></div></div>
              <div class="track htrack"><div class="thumb hthumb"></div></div>
            </section>
          </div>
          <footer class="status"><p>Left-click &amp; drag to define group (or left-click to start defining a group polygon)</p>
            <span><svg width="20" height="18" viewBox="0 0 20 18"><path d="M15 0L0 10h8l-2 8L20 8h-8z" fill="${GREEN}"/></svg></span>
            <span><svg width="20" height="20" viewBox="0 0 20 20"><circle cx="10" cy="10" r="10" fill="#666"/><path d="M10 3v9M10 14v3" stroke="#fff" stroke-width="2.600"/></svg></span>
          </footer>
        </div>
      </div>
    </div>`;
  }
}
